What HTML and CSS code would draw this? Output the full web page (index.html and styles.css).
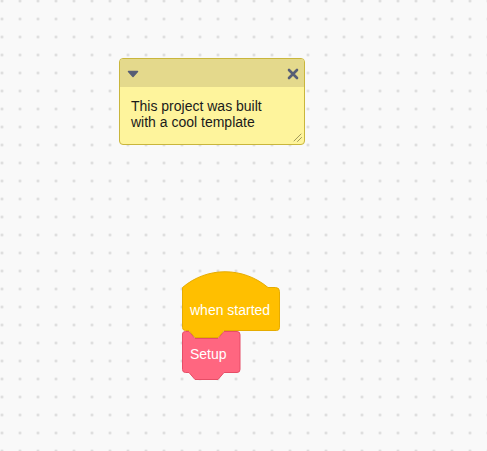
FILE: index.html
```html
<!DOCTYPE html>
<html>
<head>
<meta charset="utf-8">
<link rel="stylesheet" href="styles.css">
</head>
<body>
<div class="workspace">
  <svg class="blocks" width="487" height="451" viewBox="0 0 487 451">
    <path class="blk-pink" d="M182.5,334 Q182.5,331.5 185.5,331.5 L189,331.5 L195,338.5 L218,338.5 L224,331.5 L237,331.5 Q240,331.5 240,334.5 L240,369.5 Q240,372.5 237,372.5 L224,372.5 L218,379.5 L195,379.5 L189,372.5 L185.5,372.5 Q182.5,372.5 182.5,369.5 Z"/>
    <text class="blk-text" x="190" y="359">Setup</text>
    <path class="blk-yellow" d="M182.5,287.5 C207,266.5 243,266.5 268,287.5 L275.5,287.5 Q279.5,287.5 279.5,291.5 L279.5,327.5 Q279.5,330.5 276.5,330.5 L224,330.5 L218,337.5 L195,337.5 L189,330.5 L185.5,330.5 Q182.5,330.5 182.5,327.5 Z"/>
    <text class="blk-text" x="190" y="315">when started</text>
  </svg>

  <div class="comment">
    <div class="comment-head">
      <svg class="icon-collapse" width="12" height="8" viewBox="0 0 12 8">
        <path d="M1.5,1.5 L10.5,1.5 L6,6.5 Z" fill="#575e75" stroke="#575e75" stroke-width="1.5" stroke-linejoin="round"/>
      </svg>
      <svg class="icon-close" width="12" height="12" viewBox="0 0 12 12">
        <path d="M2,2 L10,10 M10,2 L2,10" stroke="#575e75" stroke-width="2.6" stroke-linecap="round"/>
      </svg>
    </div>
    <div class="comment-body">
      <p class="comment-text">This project was built with a cool template</p>
      <svg class="resize" width="9" height="9" viewBox="0 0 9 9">
        <path d="M1,8 L8,1 M4.5,8.5 L8.5,4.5" stroke="#a0995c" stroke-width="1" stroke-linecap="round"/>
      </svg>
    </div>
  </div>
</div>
</body>
</html>
```

FILE: styles.css
```css
html, body {
  margin: 0;
  padding: 0;
}

body {
  width: 487px;
  height: 451px;
  overflow: hidden;
  font-family: "Liberation Sans", Arial, sans-serif;
}

.workspace {
  position: relative;
  width: 487px;
  height: 451px;
  background-color: #f9f9f9;
  background-image: radial-gradient(circle at 1.5px 1.5px, #d6d6d6 0.9px, rgba(214,214,214,0) 1.6px);
  background-size: 18px 18px;
  background-position: 0.5px -0.5px;
}

.blocks {
  position: absolute;
  left: 0;
  top: 0;
}

.blk-yellow {
  fill: #ffbf00;
  stroke: #e6ac00;
  stroke-width: 1;
}

.blk-pink {
  fill: #ff6680;
  stroke: #e64d66;
  stroke-width: 1;
}

.blk-text {
  fill: #ffffff;
  font-family: "Liberation Sans", Arial, sans-serif;
  font-size: 14px;
}

.comment {
  position: absolute;
  left: 119px;
  top: 58px;
  width: 184px;
  height: 85px;
  border: 1px solid #c9b63c;
  border-radius: 4px;
  background: #fef49c;
  display: flex;
  flex-direction: column;
  overflow: hidden;
}

.comment-head {
  height: 28px;
  background: #e4d98c;
  display: flex;
  align-items: center;
  justify-content: space-between;
  padding: 0 5px 0 7px;
  flex-shrink: 0;
}

.icon-collapse {
  display: block;
  margin-top: 1px;
}

.icon-close {
  display: block;
  margin-top: 1px;
}

.comment-body {
  position: relative;
  flex: 1;
  padding: 11px 11px 0 11px;
}

.comment-text {
  margin: 0;
  font-size: 14px;
  line-height: 16px;
  color: #1a1a1a;
  width: 150px;
}

.resize {
  position: absolute;
  right: 2px;
  bottom: 2px;
  display: block;
}
```
